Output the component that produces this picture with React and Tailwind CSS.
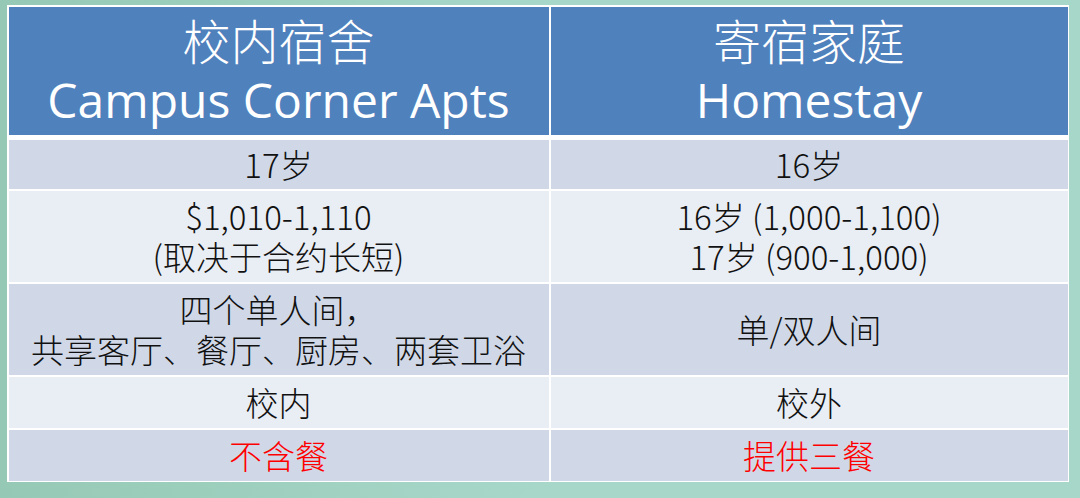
import React from "react";

const rows = [
  { h: "h-[49px]", bg: "bg-[#d0d8e8]", left: ["17岁"], right: ["16岁"] },
  {
    h: "h-[91px]",
    bg: "bg-[#e9edf4]",
    left: ["$1,010-1,110", "(取决于合约长短)"],
    right: ["16岁 (1,000-1,100)", "17岁 (900-1,000)"],
  },
  {
    h: "h-[91px]",
    bg: "bg-[#d0d8e8]",
    left: ["四个单人间，", "共享客厅、餐厅、厨房、两套卫浴"],
    right: ["单/双人间"],
  },
  { h: "h-[51px]", bg: "bg-[#e9edf4]", left: ["校内"], right: ["校外"] },
  { h: "h-[51px]", bg: "bg-[#d0d8e8]", left: ["不含餐"], right: ["提供三餐"], red: true },
];

const Cell = ({ lines, className, red }) => (
  <div
    className={`flex items-center justify-center text-center text-[33px] leading-[40px] font-light ${
      red ? "text-[#ff0000]" : "text-[#111111]"
    } ${className}`}
  >
    <p className="whitespace-nowrap">
      {lines.map((l, i) => (
        <React.Fragment key={l}>
          {i > 0 && <br />}
          {l}
        </React.Fragment>
      ))}
    </p>
  </div>
);

const Head = ({ zh, en }) => (
  <div className="h-[128px] bg-[#4f81bd] text-white flex flex-col items-center justify-center pt-[1px]">
    <div className="text-[48px] leading-[58px] font-light">{zh}</div>
    <div
      className="text-[48px] leading-[64px]"
      style={{ fontFamily: '"Open Sans", sans-serif' }}
    >
      {en}
    </div>
  </div>
);

export default function App() {
  return (
    <div
      className="w-[1080px] h-[498px] overflow-hidden bg-[#a7d7c9] bg-gradient-to-r from-[#96c9b5] via-[#a7d7c9] to-[#a7d7c9] pt-[5px] pl-[7px]"
      style={{ fontFamily: '"Noto Sans CJK SC", "Noto Sans", sans-serif' }}
    >
      <div className="w-[1062px] bg-white p-[1.5px]">
        {/* header */}
        <div className="grid grid-cols-[540px_1fr] gap-[2px] mb-[5px]">
          <Head zh="校内宿舍" en="Campus Corner Apts" />
          <Head zh="寄宿家庭" en="Homestay" />
        </div>

        {/* body */}
        <div className="flex flex-col gap-[2px]">
          {rows.map((r, i) => (
            <div key={i} className="grid grid-cols-[540px_1fr] gap-[2px]">
              <Cell lines={r.left} red={r.red} className={`${r.h} ${r.bg}`} />
              <Cell lines={r.right} red={r.red} className={`${r.h} ${r.bg}`} />
            </div>
          ))}
        </div>
      </div>
    </div>
  );
}
